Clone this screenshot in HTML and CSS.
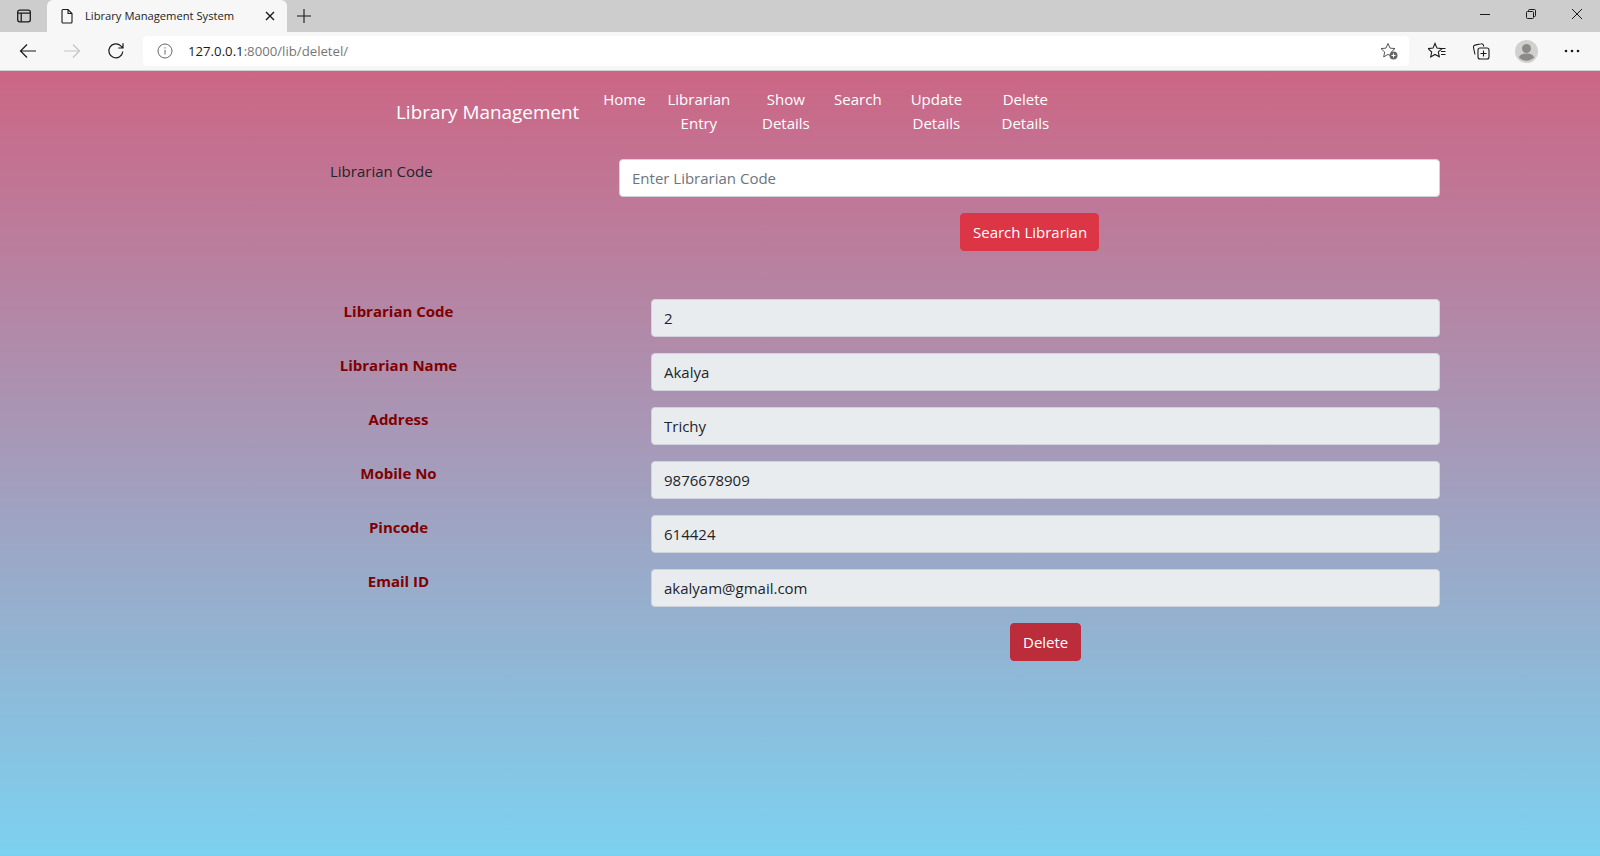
FILE: index.html
```html
<!DOCTYPE html>
<html lang="en">
<head>
  <meta charset="UTF-8">
  <meta name="viewport" content="width=device-width, initial-scale=1">
  <title>Library Management System</title>
  <link rel="stylesheet" href="styles.css">
</head>
<body>

  <div class="tabstrip">
    <div class="tab-actions">
      <svg width="16" height="16" viewBox="0 0 16 16" fill="none" stroke="#1a1a1a" stroke-width="1.3"><rect x="1.7" y="2.2" width="12.6" height="11.6" rx="2"/><path d="M1.7 5.2h12.6M5.2 5.2v8.6"/></svg>
    </div>
    <div class="tab">
      <svg width="14" height="16" viewBox="0 0 14 16" fill="none" stroke="#1a1a1a" stroke-width="1.1"><path d="M2 2.5a1 1 0 0 1 1-1h5l4 4v8.5a1 1 0 0 1-1 1H3a1 1 0 0 1-1-1zM8 1.5v4h4"/></svg>
      <span class="tab-title">Library Management System</span>
      <svg class="tab-close" width="10" height="10" viewBox="0 0 10 10" stroke="#1a1a1a" stroke-width="1.4"><path d="M1 1l8 8M9 1l-8 8"/></svg>
    </div>
    <svg class="new-tab" width="14" height="14" viewBox="0 0 14 14" stroke="#1a1a1a" stroke-width="1.1"><path d="M7 0v14M0 7h14"/></svg>
    <div class="win-buttons">
      <svg width="10" height="10" viewBox="0 0 10 10" stroke="#1a1a1a"><path d="M0 5.5h10"/></svg>
      <svg width="10" height="10" viewBox="0 0 10 10" fill="none" stroke="#1a1a1a"><rect x=".5" y="2.5" width="7" height="7" rx="1"/><path d="M2.5 2.5v-1a1 1 0 0 1 1-1h5a1 1 0 0 1 1 1v5a1 1 0 0 1-1 1h-1"/></svg>
      <svg width="10" height="10" viewBox="0 0 10 10" stroke="#1a1a1a"><path d="M0 0l10 10M10 0L0 10"/></svg>
    </div>
  </div>

  <div class="toolbar">
    <svg class="tool-icon" width="18" height="16" viewBox="0 0 18 16" fill="none" stroke="#1a1a1a" stroke-width="1.2"><path d="M17 8H1.5M8 1.5L1.5 8 8 14.5"/></svg>
    <svg class="tool-icon" width="18" height="16" viewBox="0 0 18 16" fill="none" stroke="#c4c4c4" stroke-width="1.2"><path d="M1 8h15.5M10 1.5L16.5 8 10 14.5"/></svg>
    <svg class="tool-icon" width="18" height="18" viewBox="0 0 18 18" fill="none" stroke="#1a1a1a" stroke-width="1.2"><path d="M15.8 9.5a7 7 0 1 1-2-5.6L16 6M16 1.2V6h-4.8"/></svg>
    <div class="addressbar">
      <svg width="16" height="16" viewBox="0 0 16 16" fill="none" stroke="#666"><circle cx="8" cy="8" r="7"/><path d="M8 7v4.5M8 4.2v1.4"/></svg>
      <span class="url"><span class="url-host">127.0.0.1</span>:8000/lib/deletel/</span>
      <svg class="star-add" width="18" height="18" viewBox="0 0 18 18" fill="none" stroke="#555"><path d="M8 1.5l2 4.6 5 .5-3.7 3.3 1 4.9L8 12.4l-4.3 2.5 1-4.9L1 6.600l5-.5z"/><circle cx="13.500" cy="13.500" r="4" fill="#666" stroke="none"/><path d="M13.500 11.500v4M11.500 13.500h4" stroke="#fff"/></svg>
    </div>
    <div class="tool-right">
      <svg width="18" height="18" viewBox="0 0 18 18" fill="none" stroke="#1a1a1a" stroke-width="1.100"><path d="M7 1.500l2 4.600 5 .5-3.700 3.300 1 4.900L7 12.400l-4.300 2.500 1-4.900L0 6.600l5-.5z"/><path d="M12.500 6.500h5M13 9.500h4.500M13 12.500h4.500" stroke-width="1"/></svg>
      <svg width="18" height="18" viewBox="0 0 18 18" fill="none" stroke="#1a1a1a" stroke-width="1.100"><path d="M3 12.500L1.500 5.500a2 2 0 0 1 1.500-2.400l6-1.300a2 2 0 0 1 2.400 1.400l.3 1.300"/><rect x="6" y="6" width="11" height="11" rx="2"/><path d="M11.500 8.500v6M8.500 11.500h6"/></svg>
      <svg class="avatar" width="23" height="23" viewBox="0 0 23 23"><circle cx="11.500" cy="11.500" r="11.500" fill="#d0d0ce"/><circle cx="11.500" cy="8.500" r="4.500" fill="#8c8a88"/><path d="M3.800 17.500c1-3 4-4 7.700-4s6.700 1 7.700 4a11 11 0 0 1-15.400 0z" fill="#8c8a88"/></svg>
      <svg width="16" height="4" viewBox="0 0 16 4" fill="#1a1a1a"><circle cx="2" cy="2" r="1.300"/><circle cx="8" cy="2" r="1.300"/><circle cx="14" cy="2" r="1.300"/></svg>
    </div>
  </div>

  <div class="page">
    <nav class="navbar">
      <a class="brand" href="#">Library Management</a>
      <a class="nav-link w-home" href="#">Home</a>
      <a class="nav-link w-entry" href="#">Librarian Entry</a>
      <a class="nav-link w-show" href="#">Show Details</a>
      <a class="nav-link w-search" href="#">Search</a>
      <a class="nav-link w-update" href="#">Update Details</a>
      <a class="nav-link w-delete" href="#">Delete Details</a>
    </nav>

    <form class="search-form">
      <label class="search-label" for="code">Librarian Code</label>
      <input class="field" type="text" id="code" placeholder="Enter Librarian Code">
      <button class="btn btn-search" type="button">Search Librarian</button>
    </form>

    <form class="detail-form">
      <label class="detail-label">Librarian Code</label>
      <input class="field field-ro" type="text" value="2" readonly>
      <label class="detail-label">Librarian Name</label>
      <input class="field field-ro" type="text" value="Akalya" readonly>
      <label class="detail-label">Address</label>
      <input class="field field-ro" type="text" value="Trichy" readonly>
      <label class="detail-label">Mobile No</label>
      <input class="field field-ro" type="text" value="9876678909" readonly>
      <label class="detail-label">Pincode</label>
      <input class="field field-ro" type="text" value="614424" readonly>
      <label class="detail-label">Email ID</label>
      <input class="field field-ro" type="text" value="akalyam@gmail.com" readonly>
      <button class="btn btn-delete" type="button">Delete</button>
    </form>
  </div>

</body>
</html>
```

FILE: styles.css
```css
* {
  box-sizing: border-box;
}

html, body {
  height: 100%;
}

body {
  margin: 0;
  display: flex;
  flex-direction: column;
  height: 856px;
  overflow: hidden;
  font-family: "Open Sans", sans-serif;
  font-size: 15px;
  line-height: 24px;
  color: #212529;
}

/* browser chrome */
.tabstrip {
  height: 32px;
  flex: none;
  display: flex;
  align-items: flex-end;
  background-color: #cdcdcd;
}

.tab-actions {
  width: 47px;
  height: 32px;
  display: flex;
  align-items: center;
  justify-content: center;
}

.tab {
  width: 240px;
  height: 32px;
  display: flex;
  align-items: center;
  padding: 0 12px 0 13px;
  background-color: #f7f7f7;
  border-radius: 6px 6px 0 0;
}

.tab-title {
  flex: 1;
  margin-left: 11px;
  font-size: 11.2px;
  color: #222;
}

.new-tab {
  margin: 0 0 9px 10px;
}

.win-buttons {
  margin-left: auto;
  width: 138px;
  height: 32px;
  display: flex;
  align-items: center;
  justify-content: space-between;
  padding: 0 18px 4px 18px;
}

.toolbar {
  height: 39px;
  flex: none;
  display: flex;
  align-items: center;
  padding-left: 19px;
  background-color: #f7f7f7;
  border-bottom: 1px solid #d2d2d2;
}

.tool-icon {
  margin-right: 26px;
}

.addressbar {
  width: 1266px;
  height: 30px;
  margin-left: -8px;
  display: flex;
  align-items: center;
  padding: 0 11px 0 14px;
  background-color: #fff;
  border-radius: 4px;
}

.url {
  margin-left: 15px;
  font-size: 13.2px;
  color: #767676;
}

.url-host {
  color: #1a1a1a;
}

.star-add {
  margin-left: auto;
}

.tool-right {
  flex: 1;
  display: flex;
  align-items: center;
  justify-content: space-between;
  padding: 0 20px 0 19px;
}

/* page */
.page {
  flex: 1;
  background: linear-gradient(#cc6685, #7dd1f0);
}

.navbar {
  display: flex;
  align-items: center;
  padding: 16px 0 0 396px;
  color: #fff;
}

.brand {
  margin: 2px 16px 0 0;
  font-size: 18.9px;
  line-height: 30px;
  color: #fff;
  text-decoration: none;
  white-space: nowrap;
}

.nav-link {
  color: #fff;
  text-align: center;
  text-decoration: none;
  align-self: flex-start;
}

.w-home { width: 58px; }
.w-entry { width: 91px; }
.w-show { width: 83px; }
.w-search { width: 61px; }
.w-update { width: 96px; }
.w-delete { width: 82px; }

.search-form {
  display: grid;
  grid-template-columns: 289px 821px;
  justify-content: start;
  margin: 24px 0 0 330px;
}

.search-label {
  color: #212529;
}

.field {
  display: block;
  width: 100%;
  height: 38px;
  padding: 6px 12px;
  font: inherit;
  color: #212529;
  background-color: #fff;
  border: 1px solid #ced4da;
  border-radius: 4px;
}

.field::placeholder {
  color: #6c757d;
}

.field-ro {
  background-color: #e9ecef;
}

.btn {
  justify-self: center;
  height: 38px;
  padding: 6px 12px;
  font: inherit;
  color: #fff;
  white-space: nowrap;
  border-radius: 4px;
  cursor: pointer;
}

.btn-search {
  grid-column: 2;
  margin-top: 16px;
  width: 139px;
  background-color: #dc3545;
  border: 1px solid #dc3545;
}

.detail-form {
  display: grid;
  grid-template-columns: 321px 789px;
  row-gap: 16px;
  justify-content: start;
  margin: 48px 0 0 330px;
}

.detail-label {
  text-align: center;
  padding-right: 184px;
  font-weight: 700;
  color: #800000;
}

.btn-delete {
  grid-column: 2;
  width: 71px;
  background-color: #bb2d3b;
  border: 1px solid #bb2d3b;
}
```
